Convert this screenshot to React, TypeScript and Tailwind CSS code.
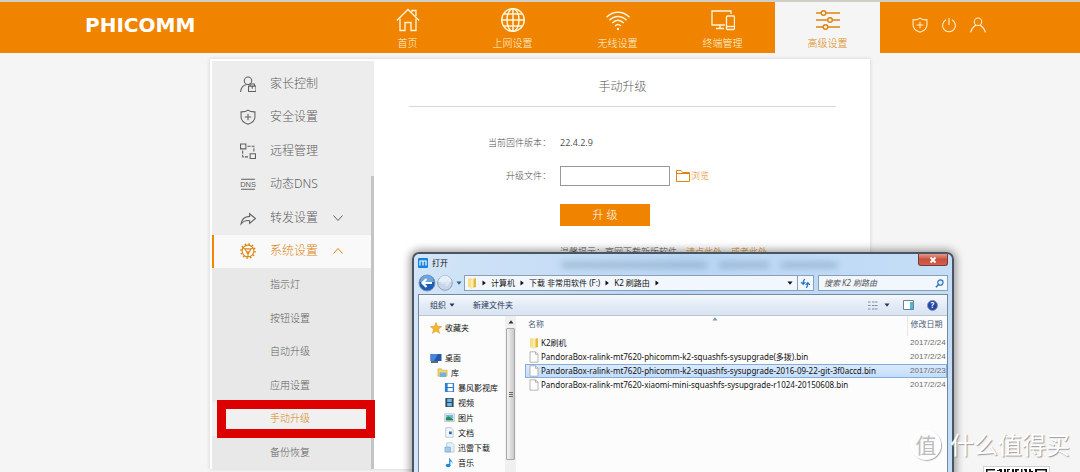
import React from 'react';

type IconProps = { className?: string; children: React.ReactNode; box?: string };

function Icon({ className = '', children, box = '0 0 24 24' }: IconProps) {
  return (
    <svg viewBox={box} className={className} fill="none" stroke="currentColor" strokeWidth="1" aria-hidden="true">
      {children}
    </svg>
  );
}

const ShieldPath = (
  <>
    <path d="M7.5 1C5.8 2.300 3.700 2.800 1 2.700V7.500C1 10.800 3.800 13 7.500 14.300C11.200 13 14 10.800 14 7.500V2.700C11.300 2.800 9.200 2.300 7.500 1Z" />
    <path d="M7.500 4.500V10.500M4.500 7.500H10.500" />
  </>
);

const tabs = [
  {
    label: '首页',
    icon: (
      <>
        <path d="M.8 12.500L12 1.500L23.200 12.500" strokeWidth="1.300" />
        <path d="M4 10.500V22.500H9V14.500H15V22.500H20V10.500M16 4V2.500H20V8" strokeWidth="1.300" />
      </>
    ),
  },
  {
    label: '上网设置',
    icon: (
      <g strokeWidth="1.500">
        <circle cx="12" cy="12" r="11.300" />
        <ellipse cx="12" cy="12" rx="6" ry="11.300" />
        <path d="M12 .7V23.300M.7 12H23.300M2.800 6H21.200M2.800 18H21.200" />
      </g>
    ),
  },
  {
    label: '无线设置',
    icon: (
      <g strokeWidth="1.400">
        <path d="M.5 9.300C7 2.600 17 2.600 23.500 9.300M3.400 12.200C8.500 7.200 15.500 7.200 20.600 12.200M6.200 15C9.800 11.600 14.200 11.600 17.800 15M9 18C10.900 16.200 13.100 16.200 15 18" />
        <circle cx="12" cy="21" r="1.200" fill="currentColor" strokeWidth="0" />
      </g>
    ),
  },
  {
    label: '终端管理',
    icon: (
      <g strokeWidth="1.300">
        <path d="M14 17H1V3H20V6M5 20.500H13M9 17V20.500" />
        <rect x="15.500" y="8" width="8" height="13.500" rx="1" />
        <path d="M15.500 18.500H23.500" />
      </g>
    ),
  },
  {
    label: '高级设置',
    active: true,
    icon: (
      <g strokeWidth="1.500">
        <path d="M0 5H5M10 5H24M0 12H11.500M16.500 12H24M0 19H7M12 19H24" />
        <circle cx="7.500" cy="5" r="2.300" />
        <circle cx="14" cy="12" r="2.300" />
        <circle cx="9.500" cy="19" r="2.300" />
      </g>
    ),
  },
];

const menu = [
  {
    label: '家长控制',
    icon: (
      <>
        <circle cx="7.500" cy="4.500" r="3.500" />
        <path d="M.5 15C1 11 3 8.500 6 8.200M8 9.500H15V14.500H8ZM9.500 9.500V7.500H13.500V9.500M11.500 9.500V12" />
      </>
    ),
  },
  { label: '安全设置', icon: ShieldPath },
  {
    label: '远程管理',
    icon: (
      <>
        <path d="M.5 1H5.500V5.500H.5ZM9.500 10H14.500V14.500H9.500Z" />
        <path d="M7 3H13V9M2.500 7V13H8" strokeDasharray="3 1" />
      </>
    ),
  },
  {
    label: '动态DNS',
    icon: (
      <>
        <path d="M1 3H14M1 12.500H14" />
        <text x="7.500" y="10.200" textAnchor="middle" fontSize="7" fill="currentColor" stroke="none" fontFamily="Liberation Sans, sans-serif">
          DNS
        </text>
      </>
    ),
  },
  {
    label: '转发设置',
    chevron: 'down',
    icon: <path d="M9 3.500L14.500 8L9 12.500V10C5.500 9.500 3 10.500 1 13C1.500 8.500 4.500 6.300 9 6Z" />,
  },
  {
    label: '系统设置',
    chevron: 'up',
    active: true,
    icon: (
      <>
        <circle cx="7.500" cy="7.500" r="5.500" />
        <circle cx="7.500" cy="7.500" r="6.600" strokeDasharray="1.500 1.960" strokeWidth="1.400" />
        <path d="M4.500 5.500H10.500L7.500 10.500ZM7.500 7.500L7.500 13M4.500 5.500L2.500 4.500M10.500 5.500L12.500 4.500" />
      </>
    ),
  },
];

const subMenu = ['指示灯', '按钮设置', '自动升级', '应用设置', '手动升级', '备份恢复'];

const tree = [
  {
    label: '库',
    indent: 'pl-[18px]',
    icon: (
      <>
        <path d="M1 2H5L6 3.500H11V10H1Z" fill="#f3d56b" stroke="#c9a63a" strokeWidth=".6" />
        <path d="M3 6H10V11H3Z" fill="#6fb1e0" />
      </>
    ),
  },
  {
    label: '暴风影视库',
    indent: 'pl-[25px]',
    icon: (
      <>
        <path d="M1 1H11V11H1Z" fill="#2f7fd0" />
        <path d="M4 2H9.500V5.500H4ZM4 6.500H9.500V10H4Z" fill="#fff" />
      </>
    ),
  },
  {
    label: '视频',
    indent: 'pl-[25px]',
    icon: (
      <>
        <path d="M1.500 1H10.500V11H1.500Z" fill="#34495e" />
        <path d="M3.500 2H8.500V5.500H3.500ZM3.500 6.500H8.500V10H3.500Z" fill="#6fb7e6" />
      </>
    ),
  },
  {
    label: '图片',
    indent: 'pl-[25px]',
    icon: (
      <>
        <path d="M.8 2H11.200V10.500H.8Z" fill="#eef4f8" stroke="#9aa7b0" strokeWidth=".6" />
        <path d="M2 3.200H10V6.500H2Z" fill="#6dbbe8" />
        <path d="M2 6.500L5 5L10 7.500V9.200H2Z" fill="#2d8a57" />
      </>
    ),
  },
  {
    label: '文档',
    indent: 'pl-[25px]',
    icon: (
      <>
        <path d="M2 .8H8L10 3V11.200H2Z" fill="#f5f9fc" stroke="#8fa3b3" strokeWidth=".6" />
        <path d="M5.500 5H8.500V8H5.500Z" fill="#2d6cb5" />
      </>
    ),
  },
  {
    label: '迅雷下载',
    indent: 'pl-[25px]',
    icon: (
      <>
        <path d="M3 .8H9L11 3V11H3Z" fill="#e4f1fa" stroke="#8fb3cb" strokeWidth=".6" />
        <path d="M1 5.500H7V11H1Z" fill="#a3cbe8" stroke="#6c9fc4" strokeWidth=".6" />
      </>
    ),
  },
  {
    label: '音乐',
    indent: 'pl-[25px]',
    icon: (
      <>
        <path d="M6 1C7 3.500 10 4 9 7.500C8.800 5.500 7.500 5 7 5V9.500H5.500V1Z" fill="#2b9be0" />
        <ellipse cx="4.500" cy="9.300" rx="2.600" ry="2" fill="#1f86d0" />
      </>
    ),
  },
];

const files = [
  { name: 'K2刷机', date: '2017/2/24', folder: true },
  { name: 'PandoraBox-ralink-mt7620-phicomm-k2-squashfs-sysupgrade(多拨).bin', date: '2017/2/24' },
  {
    name: 'PandoraBox-ralink-mt7620-phicomm-k2-squashfs-sysupgrade-2016-09-22-git-3f0accd.bin',
    date: '2017/2/23',
    selected: true,
  },
  { name: 'PandoraBox-ralink-mt7620-xiaomi-mini-squashfs-sysupgrade-r1024-20150608.bin', date: '2017/2/24' },
];

function FolderIcon() {
  return (
    <svg viewBox="0 0 12 12" className="size-3 shrink-0" aria-hidden="true">
      <path d="M2 1L6 1.500V11.500L2 10Z" fill="#f8e08a" />
      <path d="M5 2.500L10 1V10L5 11.500Z" fill="#e6b93f" />
      <path d="M5 2.500L7.500 1.800V10.800L5 11.500Z" fill="#fbeeb0" />
    </svg>
  );
}

function Caret({ className = '' }: { className?: string }) {
  return (
    <svg viewBox="0 0 6 6" className={`size-[6px] shrink-0 ${className}`} aria-hidden="true">
      <path d="M.5 1.500H5.500L3 4.800Z" fill="currentColor" />
    </svg>
  );
}

function Header() {
  return (
    <header className="border-t-2 border-[#cfcfc8] bg-[#f08300]">
      <div className="mx-auto flex h-[51px] max-w-[910px] items-stretch">
        <h1 className="flex flex-1 items-center pb-[5px] font-['DejaVu_Sans',sans-serif] text-[20px] font-bold leading-none text-white">
          PHICOMM
        </h1>
        <nav className="flex">
          {tabs.map((t) => (
            <a
              key={t.label}
              href="#"
              className={`flex w-[105px] flex-col items-center gap-[3px] pt-[6px] text-[10px] leading-4 ${
                t.active ? 'bg-[#f5f5f5] text-[#dd8510]' : 'text-[#fff6dc]'
              }`}
            >
              <Icon className="size-6">{t.icon}</Icon>
              {t.label}
            </a>
          ))}
        </nav>
        <div className="flex w-[115px] items-center justify-end gap-[13px] pb-[5px] pr-[9px] text-[#fff0d0]">
          <button aria-label="安全">
            <Icon className="size-4" box="0 0 15 15">{ShieldPath}</Icon>
          </button>
          <button aria-label="退出">
            <Icon className="size-4" box="0 0 15 15">
              <path d="M4.800 2.500A6 6 0 1 0 10.200 2.500M7.500 1V7.500" />
            </Icon>
          </button>
          <button aria-label="用户">
            <Icon className="size-4" box="0 0 15 15">
              <circle cx="7.500" cy="4.500" r="3.500" />
              <path d="M.5 14.500C1.500 10.500 3.500 9 5.500 7.500M14.500 14.500C13.500 10.500 11.500 9 9.500 7.500" />
            </Icon>
          </button>
        </div>
      </div>
    </header>
  );
}

function Sidebar() {
  return (
    <aside className="flex w-[162px] shrink-0 bg-[#ededed] pt-[6px]">
      <ul className="flex h-[402px] min-w-0 flex-1 flex-col">
        {menu.map((m) => (
          <li key={m.label} className="min-h-0 flex-1">
            <a
              href="#"
              className={`flex h-full items-center border-l-2 pl-[26px] text-[12px] ${
                m.active ? 'border-[#f08300] bg-[#f9f9f9] text-[#dd8510]' : 'border-transparent text-[#606060]'
              }`}
            >
              <Icon className="size-4 shrink-0" box="0 0 15 15">{m.icon}</Icon>
              <span className="w-[63px] pl-[14px]">
                <span className="whitespace-nowrap">{m.label}</span>
              </span>
              {m.chevron && (
                <Icon className="ml-[14px] size-[10px]" box="0 0 10 10">
                  <path d={m.chevron === 'down' ? 'M.5 2.500L5 7.500L9.500 2.500' : 'M.5 7.500L5 2.500L9.500 7.500'} />
                </Icon>
              )}
            </a>
          </li>
        ))}
        {subMenu.map((s) => (
          <li key={s} className="relative min-h-0 flex-1 bg-[#e8e8e8]">
            <a
              href="#"
              className={`flex h-full items-center pl-[58px] text-[10px] ${
                s === '手动升级' ? 'bg-[#f0f0f0] text-[#dd8510]' : 'text-[#606060]'
              }`}
            >
              {s}
            </a>
            {s === '手动升级' && (
              <span className="pointer-events-none absolute -inset-y-[2px] -right-[4px] left-[5px] z-10 border-[9px] border-[#dc0000]" />
            )}
          </li>
        ))}
      </ul>
      <div className="flex w-[3px] flex-col justify-end">
        <div className="h-[293px] bg-[#c4c4c4]" />
      </div>
    </aside>
  );
}

function UpgradeForm() {
  return (
    <main className="min-w-0 flex-1 bg-white pl-[35px] pr-8">
      <h2 className="border-b border-[#d8d8d8] pb-[10px] pt-[17px] text-center text-[12px] leading-[18px] text-[#606060]">
        手动升级
      </h2>
      <div className="mt-[26px] grid grid-cols-[142px_1fr] items-center gap-x-[9px] text-[9px] text-[#505050]">
        <span className="h-5 text-right leading-5">当前固件版本：</span>
        <span className="h-5 font-['Open_Sans',sans-serif] text-[9px] font-normal leading-5">22.4.2.9</span>
        <label htmlFor="fw" className="mt-[13px] text-right leading-5">升级文件：</label>
        <div className="mt-[13px] flex items-center">
          <input id="fw" className="h-5 w-[110px] border border-[#999] bg-white px-1 outline-none" />
          <button className="ml-[6px] flex items-center gap-px text-[#dd8510]">
            <Icon className="size-[14px]" box="0 0 14 14">
              <path d="M.5 1.500H5L6.500 3.500H13.500V12.500H.5ZM.5 4.500H13.500" />
            </Icon>
            浏览
          </button>
        </div>
        <button className="col-start-2 mt-[18px] h-[22px] w-[90px] bg-[#f08300] text-[11px] text-white">升 级</button>
        <p className="col-start-2 mt-[18px] whitespace-nowrap leading-4">
          温馨提示：官网下载新版软件
          <a href="#" className="ml-[9px] text-[#dd8510] underline">请点此处</a>
          <a href="#" className="ml-[9px] text-[#dd8510] underline">或者此处</a>
        </p>
      </div>
    </main>
  );
}

function OpenDialog() {
  return (
    <section
      role="dialog"
      aria-label="打开"
      className="absolute -bottom-4 left-[202px] top-[199px] flex w-[542px] flex-col overflow-hidden rounded-t-[7px] border-2 border-[#4a5560] bg-linear-to-r from-[#d3e5f7] via-[#b9d6f4] to-[#c5def7] px-[4px] text-[8px] font-normal text-[#111] shadow-[0_0_8px_2px_rgba(0,0,0,0.4)]"
    >
      <div aria-hidden="true" className="pointer-events-none absolute left-[148px] top-[8px] flex gap-3 blur-[3px]">
        <span className="h-[6px] w-[145px] bg-[#5a7896]/35" />
        <span className="h-[6px] w-[50px] bg-[#5a7896]/35" />
        <span className="h-[6px] w-[56px] bg-[#5a7896]/35" />
      </div>
      <div className="flex h-[19px] shrink-0 items-start justify-between">
        <div className="flex items-center gap-[4px] pt-[3px] leading-3">
          <svg viewBox="0 0 10 10" className="size-[10px]" aria-hidden="true">
            <rect width="10" height="10" rx="1" fill="#1583e0" />
            <path d="M2 7.500V3H8V7.500M5 3V7.500" fill="none" stroke="#fff" strokeWidth="1.200" />
          </svg>
          打开
        </div>
        <button
          aria-label="关闭"
          className="flex h-3 w-[30px] items-center justify-center rounded-b-[3px] border border-t-0 border-[#7a3a34] bg-linear-to-b from-[#e29a8c] via-[#c84f3a] to-[#d0624c]"
        >
          <svg viewBox="0 0 8 8" className="size-[8px]" aria-hidden="true">
            <path d="M1.500 1.500L6.500 6.500M6.500 1.500L1.500 6.500" stroke="#fff" strokeWidth="1.800" />
          </svg>
        </button>
      </div>

      <div className="relative flex h-[20px] shrink-0 items-center">
        <button aria-label="后退" className="shrink-0">
          <svg viewBox="0 0 18 18" className="size-[18px]" aria-hidden="true">
            <circle cx="9" cy="9" r="8" fill="#1d5fb4" stroke="#7f93a8" />
            <path d="M2 8A7 7 0 0 1 16 8Z" fill="#6da5dd" />
            <path d="M14 9H5M8.500 5L4.500 9L8.500 13" fill="none" stroke="#fff" strokeWidth="2.200" />
          </svg>
        </button>
        <button aria-label="前进" className="shrink-0">
          <svg viewBox="0 0 18 18" className="size-[18px]" aria-hidden="true">
            <circle cx="9" cy="9" r="7.300" fill="#c5d6e8" stroke="#8ea3b8" />
            <path d="M2.500 8A6.500 6.500 0 0 1 15.500 8Z" fill="#e6eef7" />
            <path d="M5 9H12M10 6L13 9L10 12" fill="none" stroke="#dfe9f3" strokeWidth="1.500" />
          </svg>
        </button>
        <Caret className="mx-[2px] text-[#1f5f96]" />
        <div className="flex h-4 flex-1 items-center border border-[#8ba0b8] bg-[#f1f7fd] pl-[1px]">
          <FolderIcon />
          {['计算机', '下载 非常用软件 (F:)', 'K2 刷路由'].map((p) => (
            <span key={p} className="flex items-center whitespace-nowrap">
              <Caret className="mx-[3px] -rotate-90" />
              <span className="px-[1px]">{p}</span>
            </span>
          ))}
          <Caret className="mx-[3px] -rotate-90" />
          <Caret className="ml-auto mr-[4px]" />
          <button aria-label="刷新" className="flex h-full w-4 items-center justify-center border-l border-[#8ba0b8]">
            <svg viewBox="0 0 12 12" className="size-[11px]" aria-hidden="true">
              <path d="M5.500 1.500C3.500 2 3.500 3.500 3.500 6.500M1.200 4.500L3.500 7L5.800 4.500M6.500 10.500C8.500 10 8.500 8.500 8.500 5.500M6.200 7.500L8.500 5L10.800 7.500" fill="none" stroke="#2a74c6" strokeWidth="1.400" />
            </svg>
          </button>
        </div>
        <div className="ml-[4px] flex h-4 w-[130px] items-center border border-[#8ba0b8] bg-[#f1f7fd] pl-[5px] pr-[3px]">
          <input
            aria-label="搜索"
            placeholder="搜索 K2 刷路由"
            className="min-w-0 flex-1 bg-transparent italic outline-none placeholder:text-[#555]"
          />
          <svg viewBox="0 0 10 10" className="size-[9px]" aria-hidden="true">
            <circle cx="6" cy="4" r="3" fill="#d8ecfb" stroke="#2a6db5" strokeWidth="1.200" />
            <path d="M4 6L1 9.200" stroke="#2a6db5" strokeWidth="1.600" />
          </svg>
        </div>
      </div>

      <div className="mt-px flex min-h-0 flex-1 flex-col border border-b-0 border-[#74889e] bg-[#fcfcfc]">
        <div className="flex h-[21px] shrink-0 items-center border-b border-[#b8c6d6] bg-linear-to-b from-[#f6f9fd] via-[#e3ebf6] to-[#d9e4f2] pl-[11px] pr-[9px] text-[#1e395b]">
          <button className="flex items-center gap-[3px]">
            组织
            <Caret />
          </button>
          <button className="ml-[18px]">新建文件夹</button>
          <button aria-label="视图" className="ml-auto flex items-center gap-[6px]">
            <svg viewBox="0 0 10 9" className="h-[9px] w-[10px]" aria-hidden="true">
              <path d="M0 1H3M0 4.500H3M0 8H3M4 1H10M4 4.500H10M4 8H10" stroke="#7e8ea0" strokeDasharray="2.500 .5" />
            </svg>
            <Caret />
          </button>
          <button aria-label="预览窗格" className="ml-[13px]">
            <svg viewBox="0 0 11 10" className="h-[10px] w-[11px]" aria-hidden="true">
              <path d="M.5 .5H10.500V9.500H.5Z" fill="#fff" stroke="#6d8195" />
              <path d="M7 2H10V9H7Z" fill="#55b3d8" />
            </svg>
          </button>
          <button aria-label="帮助" className="ml-[13px] flex size-[11px] items-center justify-center rounded-full border border-[#8794b8] bg-[#2345a8] font-bold leading-none text-white">
            ?
          </button>
        </div>
        <div className="flex min-h-0 flex-1">
          <div className="w-[86px] shrink-0 overflow-hidden pt-[4px] leading-[15px]">
            <div className="flex items-center gap-[3px] pl-[11px]">
              <svg viewBox="0 0 12 12" className="size-3" aria-hidden="true">
                <path d="M6 .5L7.600 4.300L11.600 4.600L8.500 7.200L9.500 11.300L6 9L2.500 11.300L3.500 7.200L.4 4.600L4.400 4.300Z" fill="#f6b62e" stroke="#d98a1c" strokeWidth=".5" />
              </svg>
              收藏夹
            </div>
            <div className="mt-[15px] flex items-center gap-[3px] pl-[11px]">
              <svg viewBox="0 0 12 12" className="size-3" aria-hidden="true">
                <path d="M.5 2H11.500V9H.5Z" fill="#2459b0" />
                <path d="M.5 2H8L4 9H.5Z" fill="#4a86d6" />
                <path d="M1 10H8" stroke="#27384f" strokeWidth="1.300" />
              </svg>
              桌面
            </div>
            {tree.map((t) => (
              <div key={t.label} className={`flex items-center gap-[3px] whitespace-nowrap ${t.indent}`}>
                <svg viewBox="0 0 12 12" className="size-[11px] shrink-0" aria-hidden="true">
                  {t.icon}
                </svg>
                {t.label}
              </div>
            ))}
          </div>
          <div className="flex w-[11px] shrink-0 flex-col items-center bg-[#f0f0f0]">
            <Caret className="my-[3px] rotate-180 text-[#333]" />
            <div className="flex h-[132px] w-[9px] flex-col items-center justify-center gap-px rounded-[1px] border border-[#a8a8a8] bg-linear-to-r from-[#f4f4f4] to-[#c9c9cc]">
              <i className="h-px w-[4px] bg-[#666]" />
              <i className="h-px w-[4px] bg-[#666]" />
              <i className="h-px w-[4px] bg-[#666]" />
            </div>
          </div>
          <div className="relative min-w-0 flex-1 overflow-hidden pl-[9px]">
            <Caret className="absolute left-[196px] top-0 rotate-180 text-[#6b9ac0]" />
            <table className="w-full table-fixed border-collapse">
              <thead>
                <tr className="h-5 text-left text-[#4c607a]">
                  <th className="pb-[4px] pl-[3px] pt-0 font-normal">名称</th>
                  <th className="w-[40px] border-l border-[#e5e9ef] pb-[4px] pl-[3px] pt-0 font-normal">
                    <span className="whitespace-nowrap">修改日期</span>
                  </th>
                </tr>
              </thead>
              <tbody className="font-['Noto_Sans','Noto_Sans_CJK_SC',sans-serif]">
                {files.map((f) => (
                  <tr
                    key={f.name}
                    className={`h-[14px] leading-3 ${
                      f.selected ? 'bg-linear-to-b from-[#dcebfc] to-[#c1dcfc] outline outline-[#84acdd] -outline-offset-1' : ''
                    }`}
                  >
                    <td className="overflow-hidden py-0 pl-[3px]">
                      <div className="flex items-center gap-px whitespace-nowrap">
                        {f.folder ? (
                          <FolderIcon />
                        ) : (
                          <svg viewBox="0 0 12 12" className="size-3 shrink-0" aria-hidden="true">
                            <path d="M2 .8H7.500L10 3.300V11.200H2Z" fill="#fdfdfd" stroke="#999" strokeWidth=".7" />
                            <path d="M7.500 .8V3.300H10" fill="none" stroke="#999" strokeWidth=".7" />
                          </svg>
                        )}
                        {f.name}
                      </div>
                    </td>
                    <td className="whitespace-nowrap py-0 pl-[3px] pr-0 font-['Liberation_Sans',sans-serif] text-[#6d6d6d]">
                      {f.date}
                    </td>
                  </tr>
                ))}
              </tbody>
            </table>
          </div>
        </div>
      </div>
    </section>
  );
}

function Watermark() {
  return (
    <div className="pointer-events-none absolute -right-[200px] bottom-[11px] flex items-center gap-[9px] whitespace-nowrap font-normal text-white [text-shadow:1px_1px_1px_#999]">
      <span className="flex size-[30px] items-center justify-center rounded-full border-2 border-white text-[21px] leading-none text-[#bdbdbd] shadow-[1px_1px_1px_#aaa] [text-shadow:none]">
        值
      </span>
      <span className="text-[24px] leading-8">什么值得买</span>
    </div>
  );
}

function QrCode() {
  return (
    <svg viewBox="0 0 67 6" className="pointer-events-none absolute -right-[180px] bottom-0 h-[6px] w-[67px]" aria-hidden="true">
      <path d="M0 0H67V6H0Z" fill="#d0d0d0" />
      <path d="M1 1H66V6H1Z" fill="#fff" />
      <path
        d="M3 3H12V4.500H4.500V6H3ZM14 4H16V3H19V6H17V5H14ZM21 3H23V6H21ZM24 3H27V4H25.500V6H24ZM29 3H31V6H29ZM32 3H36V4.500H34V6H32ZM38 3H39.500V6H38ZM41 3H44V6H42V4.500H41ZM46 3H48V5H50V6H46ZM52 3H64V6H62.500V4.500H54V6H52Z"
        fill="#111"
      />
    </svg>
  );
}

export default function App() {
  return (
    <div className="flex h-screen flex-col overflow-hidden bg-[#f5f5f5] font-['Noto_Sans','Noto_Sans_CJK_SC',sans-serif] font-light">
      <Header />
      <div className="relative mx-auto w-full max-w-[660px] flex-1 pt-[6px]">
        <div className="flex border-2 border-b-0 border-white bg-white shadow-[0_0_4px_rgba(0,0,0,0.15)]">
          <Sidebar />
          <UpgradeForm />
        </div>
        <OpenDialog />
        <Watermark />
        <QrCode />
      </div>
    </div>
  );
}
